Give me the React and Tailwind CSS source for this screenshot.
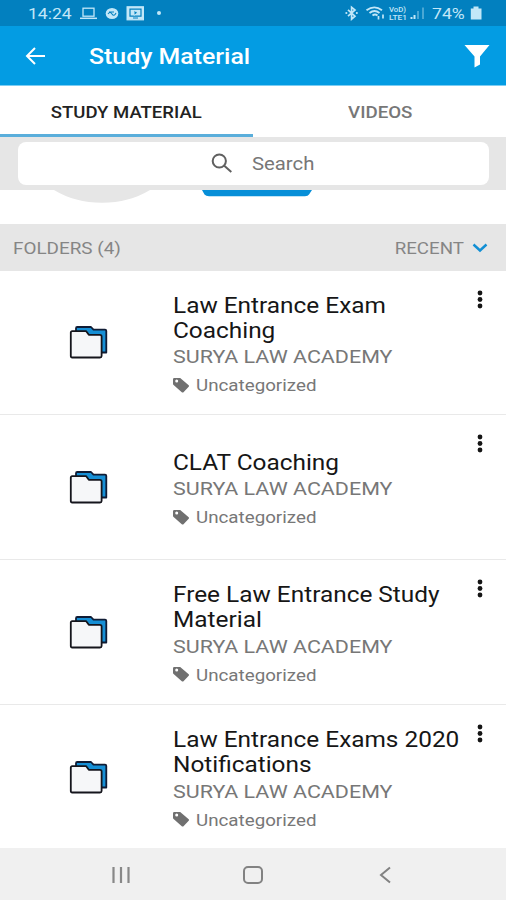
const ROWS = [
  { lines: ['Law Entrance Exam', 'Coaching'], height: 'h-[144px]' },
  { lines: ['CLAT Coaching'], height: 'h-[145px]' },
  { lines: ['Free Law Entrance Study', 'Material'], height: 'h-[145px]' },
  { lines: ['Law Entrance Exams 2020', 'Notifications'], height: 'h-[145px]' },
];

function Text({ className, origin = 'origin-left', children }) {
  return <span className={`block w-max whitespace-nowrap ${origin} ${className}`}>{children}</span>;
}

function FolderIcon() {
  return (
    <svg className="h-9 w-10" viewBox="0 0 40 36" strokeLinejoin="round" strokeWidth="1.8">
      <path d="M7 6.5V3.2Q7 2 8.2 2H22L24.5 4.7H36Q37.3 4.7 37.3 6V27.5H30L10 8Z" fill="#168fd5" stroke="#101c35" />
      <path d="M3.2 6.2H17.2L19.8 9.8H31Q32.6 9.8 32.6 11.4V31Q32.6 32.5 31 32.5H3.2Q1.8 32.5 1.8 31V7.6Q1.8 6.2 3.2 6.2Z" fill="#f6f7f9" stroke="#15151c" />
    </svg>
  );
}

function StatusBar() {
  return (
    <div className="flex h-[26px] items-center bg-[#0280bf] text-[#c2e7f8]">
      <Text className="mt-[2px] ml-[28px] text-[15.5px] leading-[26px] scale-x-[1.13]">14:24</Text>
      <svg className="ml-[12px] h-4 w-[68px]" viewBox="0 0 68 16" fill="none" stroke="currentColor">
        <rect x="4" y="3.2" width="11" height="8" strokeWidth="1.3" />
        <path d="M1 13.3H18" strokeWidth="1.5" />
        <ellipse cx="33" cy="8.5" rx="6.3" ry="5.6" fill="currentColor" stroke="none" />
        <path d="M29 9q2-3 4 0t4-1M30 7h5" stroke="#0280bf" strokeWidth="1.1" />
        <rect x="48" y="1.7" width="16.500" height="13.2" fill="currentColor" strokeWidth="1" />
        <path d="M51 4.2h11v7h-11zM54 13h5" stroke="#0280bf" strokeWidth="1.2" />
        <path d="M55 5.3v5l4-2.5z" fill="#0280bf" />
      </svg>
      <span className="ml-[10px] size-1 rounded-full bg-[#c2e7f8]" />
      <svg className="ml-auto h-4 w-[82px]" viewBox="0 0 82 16" fill="none" stroke="currentColor">
        <path d="M4 4.8l7 6.4-3.4 3V2.2L11 5l-7 6.2" strokeWidth="1.7" />
        <path d="M2.3 8h.1M12.8 8h.1" strokeWidth="2" strokeLinecap="round" />
        <path d="M22.500 5.3Q30.500 -.5 38 5.300M25.500 8q5-4 10 0M28.500 10.500q2.500-2 5 0" strokeWidth="1.8" />
        <path d="M34.500 14.500v-3.500M39 9.500v4" strokeWidth="1.700" />
        <text x="45" y="7.300" fill="currentColor" stroke="none" fontSize="8" fontWeight="500" textLength="17" lengthAdjust="spacingAndGlyphs">VoD)</text>
        <text x="45" y="15" fill="currentColor" stroke="none" fontSize="8" fontWeight="500" textLength="18" lengthAdjust="spacingAndGlyphs">LTE1</text>
        <path d="M67.500 14v-2M70.500 14v-4" strokeWidth="2" />
        <path d="M74 14V6M79 14V2.500" strokeWidth="1.500" opacity=".5" />
      </svg>
      <Text className="mt-[2px] ml-[6px] text-[15.5px] leading-[26px] scale-x-[1.14]">74%</Text>
      <svg className="mr-[24px] ml-[9px] h-4 w-[12px]" viewBox="0 0 12 16" fill="currentColor">
        <path d="M3.500 1.500h5v2h3v11H.800v-11h2.700z" />
      </svg>
    </div>
  );
}

function SearchBar() {
  return (
    <div className="flex h-[53px] bg-[#e6e6e6] pt-[5px] pl-[18px]">
      <div className="flex h-[43px] w-[471px] items-center rounded-[8px] bg-white">
        <svg className="ml-[192px] h-6 w-[24px]" viewBox="0 0 24 24" fill="none" stroke="#606060" strokeWidth="2">
          <circle cx="9.300" cy="9" r="6.600" />
          <path d="M14 13.500l7.300 6.500" />
        </svg>
        <Text className="mt-[2px] ml-[18px] text-[17.5px] text-[#777] scale-x-[1.16]">Search</Text>
      </div>
    </div>
  );
}

function FolderRow({ row }) {
  return (
    <div className={`flex items-center border-b border-[#e9e9e9] ${row.height}`}>
      <div className="ml-[69px] w-[104px] pt-[1px]"><FolderIcon /></div>
      <div className="flex-1 pt-[10px]">
        {row.lines.map((line) => (
          <Text key={line} className="h-[24.7px] text-[22px] leading-[24.700px] text-[#161616] scale-x-[1.108]">{line}</Text>
        ))}
        <Text className="text-[18.5px] leading-[28px] text-[#777] scale-x-[1.16]">SURYA LAW ACADEMY</Text>
        <div className="flex h-[30px] items-center">
          <svg className="mb-[2px] h-[17px] w-[17px]" viewBox="0 0 17 17" fill="#707070">
            <path fillRule="evenodd" d="M0 2.300Q0 1 1.300 1H7.200L15.700 8.200Q16.500 9 15.700 9.800L10.500 15.200Q9.700 16 8.800 15.200L.600 8Q0 7.500 0 6.800ZM3.700 2.600A1.500 1.500 0 1 0 3.700 5.600A1.500 1.500 0 1 0 3.700 2.600Z" />
          </svg>
          <Text className="mt-[1px] ml-[6px] text-[16.500px] text-[#777] scale-x-[1.137]">Uncategorized</Text>
        </div>
      </div>
      <svg className="mr-[21px] h-5 w-[10px] self-start mt-[19px]" viewBox="0 0 10 20" fill="#151515">
        <circle cx="5" cy="3" r="2.400" /><circle cx="5" cy="9.500" r="2.400" /><circle cx="5" cy="16" r="2.400" />
      </svg>
    </div>
  );
}

export default function App() {
  return (
    <div className="h-[900px] w-[506px] overflow-hidden bg-white font-['Roboto',sans-serif]">
      <StatusBar />
      <header className="flex h-[59px] items-center bg-[#039ce3]">
        <svg className="ml-[24px] h-5 w-[22px]" viewBox="0 0 22 20" fill="none" stroke="#fff" strokeWidth="2">
          <path d="M21 10H3M11 2L3 10l8 8" />
        </svg>
        <Text className="mt-[2px] ml-[43px] text-[22px] font-medium text-white scale-x-[1.13]">Study Material</Text>
        <svg className="mr-[16px] ml-auto h-6 w-[26px]" viewBox="0 0 26 24" fill="#fff">
          <path d="M.500 1h25L16 12.500V20.500L10.500 23.500V12.500Z" />
        </svg>
      </header>
      <nav className="grid h-[52px] grid-cols-2 grid-rows-[51px] border-t border-[#7ccdf3]">
        <div className="flex justify-center border-b-[3px] border-[#5aaedb]">
          <Text origin="origin-center" className="h-[48px] text-[17px] leading-[53px] font-medium text-[#222] scale-x-[1.09]">STUDY MATERIAL</Text>
        </div>
        <div className="flex justify-center">
          <Text origin="origin-center" className="ml-[2px] h-[48px] text-[17px] leading-[53px] font-medium text-[#777] scale-x-[1.1]">VIDEOS</Text>
        </div>
      </nav>
      <SearchBar />
      <div className="flex h-[34px] items-start">
        <svg className="ml-[52px] h-[14px] w-[100px]" viewBox="0 0 100 14" fill="#e6e6e6">
          <path d="M2 0H98Q77 12.800 50 12.800T2 0Z" />
        </svg>
        <svg className="ml-[50px] h-[7px] w-[110px]" viewBox="0 0 110 7" fill="#078fd8">
          <path d="M0 0H110L107 4.500Q106 6.300 103 6.300H7Q4 6.300 2.500 4.500Z" />
        </svg>
      </div>
      <div className="flex h-[47px] items-center justify-between bg-[#e6e6e6] pr-[18px] pl-[13px] text-[17px] text-[#858585]">
        <Text className="mt-[2px] scale-x-[1.11]">FOLDERS (4)</Text>
        <div className="flex items-center">
          <Text origin="origin-right" className="mt-[2px] scale-x-[1.1]">RECENT</Text>
          <svg className="ml-[8px] h-[10px] w-[16px]" viewBox="0 0 16 10" fill="none" stroke="#128fd4" strokeWidth="2.400">
            <path d="M1.500 1.500L8 7.500l6.500-6" />
          </svg>
        </div>
      </div>
      <main className="h-[577px] overflow-hidden">{ROWS.map((row) => <FolderRow key={row.lines[0]} row={row} />)}</main>
      <footer className="flex h-[52px] items-center bg-[#f0f0f0] pt-px">
        <svg className="ml-[111px] h-5 w-[20px]" viewBox="0 0 20 20" stroke="#888" strokeWidth="2.200"><path d="M2.500 2v16M10 2v16M17.500 2v16" /></svg>
        <span className="ml-[112px] h-[18px] w-[20px] rounded-[5px] border-2 border-[#828282]" />
        <svg className="ml-[116px] h-5 w-[12px]" viewBox="0 0 12 20" fill="none" stroke="#828282" strokeWidth="2"><path d="M11 2.500L2 10l9 7.500" /></svg>
      </footer>
    </div>
  );
}
